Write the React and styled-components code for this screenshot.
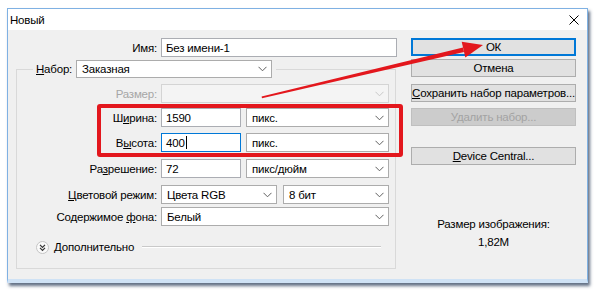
import React from 'react';
import styled, { createGlobalStyle } from 'styled-components'

const GlobalStyle = createGlobalStyle`
  html, body {
    margin: 0;
    padding: 0;
    background: #fff;
  }
  body {
    font-family: "Liberation Sans", Arial, sans-serif;
    font-size: 11.5px;
    letter-spacing: -0.2px;
    color: #000;
  }
`

const Page = styled.div`
  position: relative;
  width: 600px;
  height: 293px;
  padding: 8px 0 0 7px;
  box-sizing: border-box;
  overflow: hidden;
`

const Window = styled.div`
  width: 581px;
  height: 275px;
  box-sizing: border-box;
  border: 1px solid #7fb1e3;
  border-bottom-width: 4px;
  border-bottom-color: #cfe2f5;
  background: #f0f0f0;
  box-shadow: 2px 3px 3px rgba(30, 50, 80, 0.7);
  display: flex;
  flex-direction: column;
`

const TitleBar = styled.div`
  height: 21px;
  flex-shrink: 0;
  background: #fff;
  display: flex;
  align-items: center;
  justify-content: space-between;
  padding: 0 8px 0 2px;
`

const Body = styled.div`
  flex: 1;
  display: flex;
  padding: 8px 10px 0 0;
`

const LeftCol = styled.div`
  width: 403px;
  display: flex;
  flex-direction: column;
`

const RightCol = styled.div`
  width: 165px;
  display: flex;
  flex-direction: column;
  align-items: stretch;
`

const NameRow = styled.div`
  display: grid;
  grid-template-columns: 149px 236px;
  column-gap: 4px;
  align-items: center;
`

const Group = styled.fieldset`
  margin: 3px 0 0 8px;
  padding: 0 0 14px 0;
  width: 380px;
  box-sizing: border-box;
  min-width: 0;
  border: 1px solid #d9d9d9;
`

const Legend = styled.legend`
  margin-left: 16px;
  padding: 0 4px 0 3px;
  display: flex;
  align-items: center;
  gap: 4px;
`

const Row = styled.div`
  display: grid;
  grid-template-columns: 140px 228px;
  column-gap: 4px;
  align-items: center;
  margin-top: ${p => p.$mt}px;
`

const Label = styled.span`
  text-align: right;
  white-space: nowrap;
  color: ${p => p.$disabled ? '#a6a6a6' : '#000'};
`

const U = styled.span`
  text-decoration: underline;
`

const Fields = styled.div`
  display: flex;
  gap: ${p => p.$gap || 5}px;
`

const TextBox = styled.div`
  width: ${p => p.$w}px;
  height: 19px;
  box-sizing: border-box;
  background: #fff;
  border: 1px solid ${p => p.$focused ? '#0078d7' : '#abadb3'};
  padding-left: 4px;
  display: flex;
  align-items: center;
`

const Caret = styled.span`
  display: inline-block;
  width: 1px;
  height: 13px;
  background: #000;
  margin-left: 1px;
`

const Select = styled.div`
  width: ${p => p.$w}px;
  height: ${p => p.$h || 19}px;
  box-sizing: border-box;
  background: ${p => p.$disabled ? '#f4f4f4' : '#fff'};
  border: 1px solid ${p => p.$disabled ? '#d4d4d4' : '#acacac'};
  padding: 0 4px 0 5px;
  display: flex;
  align-items: center;
  justify-content: space-between;
  white-space: nowrap;
`

const AdvancedRow = styled.div`
  display: flex;
  align-items: center;
  gap: 5px;
  margin: 14px 14px 0 19px;
  height: 14px;
`

const Rule = styled.div`
  flex: 1;
  height: 1px;
  background: #c9c9c9;
  border-bottom: 1px solid #fff;
  margin-left: 3px;
`

const Button = styled.div`
  height: 18px;
  box-sizing: border-box;
  margin-top: ${p => p.$mt || 0}px;
  background: ${p => p.$disabled ? '#cccccc' : '#e1e1e1'};
  border: 1px solid ${p => p.$primary ? '#0078d7' : p.$disabled ? '#bfbfbf' : '#adadad'};
  box-shadow: ${p => p.$primary ? 'inset 0 0 0 1px #0078d7' : 'none'};
  color: ${p => p.$disabled ? '#a3a3a3' : '#000'};
  display: flex;
  align-items: center;
  justify-content: center;
  white-space: nowrap;
`

const Info = styled.div`
  text-align: center;
  margin-top: ${p => p.$mt}px;
`

const RedFrame = styled.div`
  position: absolute;
  left: 97px;
  top: 104px;
  width: 306px;
  height: 53px;
  box-sizing: border-box;
  border: 4px solid #e3171d;
  border-radius: 3px;
  pointer-events: none;
`

const Overlay = styled.svg`
  position: absolute;
  left: 0;
  top: 0;
  pointer-events: none;
`

const Chevron = ({ color = '#606060' }) => (
  <svg width="9" height="6" viewBox="0 0 9 6">
    <polyline points="0.5,0.8 4.5,4.8 8.5,0.8" fill="none" stroke={color} strokeWidth="1" />
  </svg>
)

const CloseIcon = () => (
  <svg width="10" height="10" viewBox="0 0 10 10">
    <path d="M0.5 0.5 L9.5 9.5 M9.5 0.5 L0.5 9.5" stroke="#000" strokeWidth="1" />
  </svg>
)

const MoreIcon = () => (
  <svg width="13" height="13" viewBox="0 0 13 13">
    <circle cx="6.5" cy="6.5" r="6" fill="#fafafa" stroke="#c4c4c4" />
    <polyline points="4,3.8 6.5,6.3 9,3.8" fill="none" stroke="#333" strokeWidth="1.2" />
    <polyline points="4,6.8 6.5,9.3 9,6.8" fill="none" stroke="#333" strokeWidth="1.2" />
  </svg>
)

const Arrow = () => (
  <Overlay width="600" height="293" viewBox="0 0 600 293">
    <polygon points="262,98.2 261.6,96.4 463,47.6 464,52" fill="#e3171d" />
    <polygon points="483,45 465.3,57.4 461.7,41.8" fill="#e3171d" />
  </Overlay>
)

class App extends React.Component {
  render() {
    return (
      <Page>
        <GlobalStyle />
        <Window>
          <TitleBar>
            <span>Новый</span>
            <CloseIcon />
          </TitleBar>
          <Body>
            <LeftCol>
              <NameRow>
                <Label>Имя:</Label>
                <TextBox $w={236}>Без имени-1</TextBox>
              </NameRow>
              <Group>
                <Legend>
                  <span><U>Н</U>абор:</span>
                  <Select $w={196} $h={18}>Заказная<Chevron /></Select>
                </Legend>
                <Row $mt={6}>
                  <Label $disabled>Размер:</Label>
                  <Select $w={228} $disabled><span /><Chevron color="#c8c8c8" /></Select>
                </Row>
                <Row $mt={5}>
                  <Label>Ш<U>и</U>рина:</Label>
                  <Fields>
                    <TextBox $w={80}>1590</TextBox>
                    <Select $w={143}>пикс.<Chevron /></Select>
                  </Fields>
                </Row>
                <Row $mt={6}>
                  <Label>В<U>ы</U>сота:</Label>
                  <Fields>
                    <TextBox $w={80} $focused>400<Caret /></TextBox>
                    <Select $w={143}>пикс.<Chevron /></Select>
                  </Fields>
                </Row>
                <Row $mt={7}>
                  <Label>Ра<U>з</U>решение:</Label>
                  <Fields>
                    <TextBox $w={80}>72</TextBox>
                    <Select $w={143}>пикс/дюйм<Chevron /></Select>
                  </Fields>
                </Row>
                <Row $mt={7}>
                  <Label><U>Ц</U>ветовой режим:</Label>
                  <Fields $gap={6}>
                    <Select $w={116}>Цвета RGB<Chevron /></Select>
                    <Select $w={106}>8 бит<Chevron /></Select>
                  </Fields>
                </Row>
                <Row $mt={3}>
                  <Label>Содержимое <U>ф</U>она:</Label>
                  <Select $w={228}>Белый<Chevron /></Select>
                </Row>
                <AdvancedRow>
                  <MoreIcon />
                  <span>Дополнительно</span>
                  <Rule />
                </AdvancedRow>
              </Group>
            </LeftCol>
            <RightCol>
              <Button $primary>ОК</Button>
              <Button $mt={3}>Отмена</Button>
              <Button $mt={7}><U>С</U>охранить набор параметров...</Button>
              <Button $mt={6} $disabled>Удалить набор...</Button>
              <Button $mt={21}><U>D</U>evice Central...</Button>
              <Info $mt={53}>Размер изображения:</Info>
              <Info $mt={6}>1,82M</Info>
            </RightCol>
          </Body>
        </Window>
        <RedFrame />
        <Arrow />
      </Page>
    );
  }
}

export default App;
